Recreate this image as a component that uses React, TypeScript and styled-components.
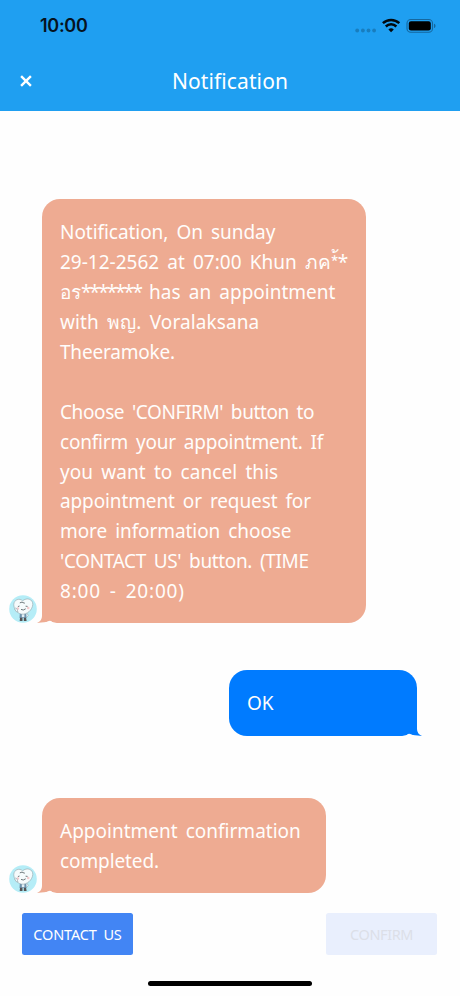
import React from "react";
import styled, { createGlobalStyle } from "styled-components";

const GlobalStyle = createGlobalStyle`
  * { box-sizing: border-box; }
  body { margin: 0; background: #fff; font-family: "Noto Sans", sans-serif; }
`;

const Screen = styled.main`
  width: 460px;
  height: 996px;
  display: flex;
  flex-direction: column;
  overflow: hidden;
  background: #fefefe;
`;

const Header = styled.header`
  height: 111px;
  flex: none;
  background: #1f9ff1;
`;

const StatusBar = styled.div`
  height: 51px;
  display: flex;
  align-items: center;
  justify-content: space-between;
  padding: 0 23px 0 40px;
`;

const Clock = styled.time`
  font: 600 18px/24px Inter, sans-serif;
  letter-spacing: -0.3px;
  color: #06131e;
`;

const NavBar = styled.div`
  height: 60px;
  display: grid;
  grid-template-columns: 51px 1fr 51px;
  align-items: center;
`;

const CloseButton = styled.button`
  display: flex;
  justify-content: center;
  padding: 0;
  border: 0;
  background: none;
`;

const Title = styled.h1`
  margin: 0;
  text-align: center;
  font-size: 21px;
  line-height: 30px;
  font-weight: 400;
  letter-spacing: 0.1px;
  font-variant-ligatures: common-ligatures;
  color: #fff;
`;

const Chat = styled.section`
  height: 783px;
  flex: none;
  display: flex;
  flex-direction: column;
  padding-top: 88px;
`;

const MessageRow = styled.div<{ $own?: boolean; $gap: number }>`
  display: flex;
  align-items: flex-end;
  justify-content: ${(p) => (p.$own ? "flex-end" : "flex-start")};
  padding: ${(p) => (p.$own ? "0 43px 0 0" : "0 0 0 9px")};
  margin-bottom: ${(p) => p.$gap}px;
`;

const AvatarSvg = styled.svg`
  width: 28px;
  height: 28px;
  flex: none;
  margin-right: 5px;
`;

const Bubble = styled.div<{ $own?: boolean; $width: number; $height: number }>`
  position: relative;
  width: ${(p) => p.$width}px;
  height: ${(p) => p.$height}px;
  padding: 19.4px 0 0 18px;
  border-radius: 18px;
  background: ${(p) => (p.$own ? "#007bff" : "#eeab92")};
  color: #fffdfb;
`;

const TailSvg = styled.svg<{ $own?: boolean }>`
  position: absolute;
  bottom: 0;
  ${(p) => (p.$own ? "right: -6px; transform: scaleX(-1);" : "left: -6px;")}
  width: 26px;
  height: 20px;
`;

const Line = styled.div<{ $track?: number }>`
  height: 29.9px;
  font-size: 19px;
  line-height: 29.9px;
  white-space: nowrap;
  word-spacing: 3.2px;
  letter-spacing: ${(p) => p.$track ?? 0}px;
`;

const Mask = styled.span`
  letter-spacing: -1.9px;
`;

const Actions = styled.footer`
  display: flex;
  justify-content: space-between;
  padding: 19px 23px 0 22px;
  height: 87px;
  flex: none;
`;

const ActionButton = styled.button<{ $muted?: boolean }>`
  width: 111px;
  height: 42px;
  padding: 0;
  border: 0;
  border-radius: 2.5px;
  background: ${(p) => (p.$muted ? "#e9effd" : "#4285f4")};
  color: ${(p) => (p.$muted ? "#dcdfe8" : "#fff")};
  font: 400 14.5px/20px "Noto Sans", sans-serif;
  letter-spacing: ${(p) => (p.$muted ? -0.4 : -0.15)}px;
  word-spacing: 3px;
`;

const HomeIndicator = styled.div`
  width: 164px;
  height: 5px;
  flex: none;
  align-self: center;
  border-radius: 3px;
  background: #000;
`;

const StatusIcons = () => (
  <svg width="82" height="20" viewBox="0 0 82 20">
    <g fill="#187dbe">
      <circle cx="2.2" cy="14.5" r="1.9" />
      <circle cx="7.9" cy="14.5" r="1.9" />
      <circle cx="13.5" cy="14.5" r="1.9" />
      <circle cx="19.1" cy="14.5" r="1.9" />
    </g>
    <g fill="none" stroke="#02080d" strokeWidth="2.5">
      <path d="M27.9 7.2a12 12 0 0 1 16.4 0" />
      <path d="M30.8 10.5a7.6 7.6 0 0 1 10.6 0" />
    </g>
    <path d="M36.1 16.3l-2.7-2.8a4 4 0 0 1 5.4 0z" fill="#02080d" />
    <rect x="52" y="3.5" width="25.5" height="12.7" rx="3.8" fill="none" stroke="#15679e" strokeWidth="1.1" />
    <rect x="53.8" y="5.3" width="22" height="9.2" rx="2.2" fill="#000" />
    <path d="M79 7.7c2 .7 2 3.6 0 4.3z" fill="#15679e" />
  </svg>
);

const Tail = ({ own }: { own?: boolean }) => (
  <TailSvg $own={own} viewBox="0 0 26 20">
    <path d="M6 0H26V20H21Q17 20 14 17.8Q9 20 1 20Q6 18 6 13Z" fill={own ? "#007bff" : "#eeab92"} />
    <path d="M14 17.8Q17 20 21 20V20.5H1V20Q9 20 14 17.8Z" fill="#fefefe" />
  </TailSvg>
);

const Avatar = () => (
  <AvatarSvg viewBox="0 0 28 28">
    <circle cx="14" cy="14" r="13.8" fill="#b5edf7" />
    <path d="M10.8 18.5h6.6l.3 4.5h-7.2z" fill="#6d92ad" />
    <path d="M11 22.8h2.5v3.2h-2.8zM14.8 22.8h2.3l.5 3.2h-2.8z" fill="#565354" />
    <path d="M12.8 18.2h2.6v4h-2.6z" fill="#e4f0f6" />
    <path
      d="M13.6 5.8C10.6 2.8 5 4.6 4.8 9.3C4.6 13.6 7.8 17.9 12.2 19.1C18.2 19.9 23.4 14.8 23.8 9.4C23.9 4.1 17.8 2.2 13.6 5.8Z"
      fill="#f6fbfc"
      stroke="#8fa3aa"
      strokeWidth=".6"
    />
    <path d="M10.8 7.9l2.4-.9M13.2 7.4l2.6.8M8.9 11.6l1.6-.6M16.6 11.2l2 .2M12 14.4q2.3 1.5 4.7-.6" fill="none" stroke="#4b5559" strokeWidth=".8" />
    <circle cx="8.8" cy="13.6" r="1.3" fill="#f5c9cc" />
    <circle cx="19.2" cy="13" r="1.3" fill="#f5c9cc" />
    <path d="M5.7 13.8q1.3-2 2.3.2l1 3.1q-2.4.4-3.3-3.3zM17.5 18l1.8 2.2-1.5 2.2" fill="#f6fbfc" stroke="#8fa3aa" strokeWidth=".6" />
  </AvatarSvg>
);

export default function App() {
  return (
    <>
      <GlobalStyle />
      <Screen>
        <Header>
          <StatusBar>
            <Clock>10:00</Clock>
            <StatusIcons />
          </StatusBar>
          <NavBar>
            <CloseButton aria-label="Close">
              <svg width="12" height="12" viewBox="0 0 12 12">
                <path d="M1.1 1.1l9.8 9.8M10.9 1.1l-9.8 9.8" stroke="#fff" strokeWidth="2.4" />
              </svg>
            </CloseButton>
            <Title>Notification</Title>
          </NavBar>
        </Header>
        <Chat>
          <MessageRow $gap={47}>
            <Avatar />
            <Bubble $width={324} $height={424}>
              <Tail />
              <Line $track={-0.05}>Notification, On sunday</Line>
              <Line>29-12-2562 at 07:00 Khun ภค*้*</Line>
              <Line>
                อร<Mask>*******</Mask> has an appointment
              </Line>
              <Line $track={0.1}>with พญ. Voralaksana</Line>
              <Line $track={-0.2}>Theeramoke.</Line>
              <Line />
              <Line $track={-0.4}>Choose 'CONFIRM' button to</Line>
              <Line $track={-0.2}>confirm your appointment. If</Line>
              <Line $track={0.06}>you want to cancel this</Line>
              <Line $track={-0.12}>appointment or request for</Line>
              <Line $track={-0.08}>more information choose</Line>
              <Line $track={-0.35}>'CONTACT US' button. (TIME</Line>
              <Line $track={0.8}>8:00 - 20:00)</Line>
            </Bubble>
          </MessageRow>
          <MessageRow $own $gap={62}>
            <Bubble $own $width={188} $height={66}>
              <Tail own />
              <Line>OK</Line>
            </Bubble>
          </MessageRow>
          <MessageRow $gap={0}>
            <Avatar />
            <Bubble $width={284} $height={95}>
              <Tail />
              <Line>Appointment confirmation</Line>
              <Line $track={-0.1}>completed.</Line>
            </Bubble>
          </MessageRow>
        </Chat>
        <Actions>
          <ActionButton>CONTACT US</ActionButton>
          <ActionButton $muted>CONFIRM</ActionButton>
        </Actions>
        <HomeIndicator />
      </Screen>
    </>
  );
}
